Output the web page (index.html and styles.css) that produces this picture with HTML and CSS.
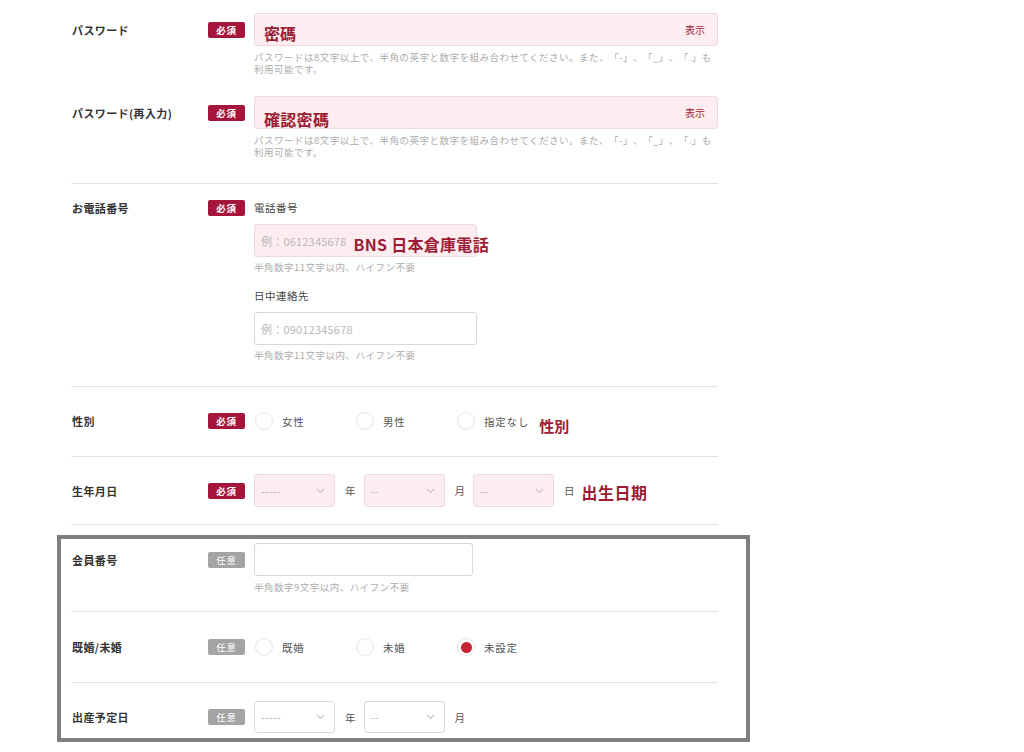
FILE: index.html
```html
<!DOCTYPE html>
<html lang="ja">
<head>
<meta charset="utf-8">
<title>会員情報入力</title>
<link rel="stylesheet" href="styles.css">
</head>
<body>
<div class="form">
  <section class="sec sec-pw">
    <div class="row row-input">
      <div class="lbl">パスワード</div>
      <div class="bcell"><span class="badge req">必須</span></div>
      <div class="field">
        <div class="inp pink"><span class="note note-pw1">密碼</span><span class="show">表示</span></div>
        <p class="help">パスワードは8文字以上で、半角の英字と数字を組み合わせてください。また、「-」、「_」、「.」も<br>利用可能です。</p>
      </div>
    </div>
    <div class="row row-input row-next">
      <div class="lbl">パスワード(再入力)</div>
      <div class="bcell"><span class="badge req">必須</span></div>
      <div class="field">
        <div class="inp pink"><span class="note note-pw2">確認密碼</span><span class="show">表示</span></div>
        <p class="help">パスワードは8文字以上で、半角の英字と数字を組み合わせてください。また、「-」、「_」、「.」も<br>利用可能です。</p>
      </div>
    </div>
  </section>

  <section class="sec sec-phone">
    <div class="row row-text">
      <div class="lbl">お電話番号</div>
      <div class="bcell"><span class="badge req">必須</span></div>
      <div class="field">
        <div class="sub">電話番号</div>
        <div class="inp pink phone"><span class="ph">例：0612345678</span><span class="note note-tel">BNS 日本倉庫電話</span></div>
        <p class="help help-tight">半角数字11文字以内、ハイフン不要</p>
        <div class="sub sub-2">日中連絡先</div>
        <div class="inp white phone"><span class="ph">例：09012345678</span></div>
        <p class="help help-tight">半角数字11文字以内、ハイフン不要</p>
      </div>
    </div>
  </section>

  <section class="sec sec-radio">
    <div class="row row-radio">
      <div class="lbl">性別</div>
      <div class="bcell"><span class="badge req">必須</span></div>
      <div class="field radios">
        <label class="opt"><span class="rd"></span>女性</label>
        <label class="opt"><span class="rd"></span>男性</label>
        <label class="opt opt-last"><span class="rd"></span>指定なし</label>
        <span class="note note-gender">性別</span>
      </div>
    </div>
  </section>

  <section class="sec sec-date">
    <div class="row row-input">
      <div class="lbl">生年月日</div>
      <div class="bcell"><span class="badge req">必須</span></div>
      <div class="field dates">
        <div class="sel pink"><span class="ph">-----</span><svg class="chev" width="9" height="6" viewBox="0 0 9 6"><path d="M1 1l3.5 3.5L8 1" fill="none" stroke="#c4c4c4" stroke-width="1.1"/></svg></div>
        <span class="unit">年</span>
        <div class="sel pink"><span class="ph">--</span><svg class="chev" width="9" height="6" viewBox="0 0 9 6"><path d="M1 1l3.5 3.5L8 1" fill="none" stroke="#c4c4c4" stroke-width="1.1"/></svg></div>
        <span class="unit">月</span>
        <div class="sel pink"><span class="ph">--</span><svg class="chev" width="9" height="6" viewBox="0 0 9 6"><path d="M1 1l3.5 3.5L8 1" fill="none" stroke="#c4c4c4" stroke-width="1.1"/></svg></div>
        <span class="unit unit-last">日</span>
        <span class="note note-birth">出生日期</span>
      </div>
    </div>
  </section>

  <div class="box">
    <section class="sec sec-member">
      <div class="row row-input">
        <div class="lbl">会員番号</div>
        <div class="bcell"><span class="badge opt-badge">任意</span></div>
        <div class="field">
          <div class="inp white member"></div>
          <p class="help">半角数字9文字以内、ハイフン不要</p>
        </div>
      </div>
    </section>

    <section class="sec sec-radio sec-marital">
      <div class="row row-radio">
        <div class="lbl">既婚/未婚</div>
        <div class="bcell"><span class="badge opt-badge">任意</span></div>
        <div class="field radios">
          <label class="opt"><span class="rd"></span>既婚</label>
          <label class="opt"><span class="rd"></span>未婚</label>
          <label class="opt opt-last"><span class="rd on"></span>未設定</label>
        </div>
      </div>
    </section>

    <section class="sec sec-due">
      <div class="row row-input row-due">
        <div class="lbl">出産予定日</div>
        <div class="bcell"><span class="badge opt-badge">任意</span></div>
        <div class="field dates">
          <div class="sel white"><span class="ph">-----</span><svg class="chev" width="9" height="6" viewBox="0 0 9 6"><path d="M1 1l3.5 3.5L8 1" fill="none" stroke="#c4c4c4" stroke-width="1.1"/></svg></div>
          <span class="unit">年</span>
          <div class="sel white"><span class="ph">--</span><svg class="chev" width="9" height="6" viewBox="0 0 9 6"><path d="M1 1l3.5 3.5L8 1" fill="none" stroke="#c4c4c4" stroke-width="1.1"/></svg></div>
          <span class="unit">月</span>
        </div>
      </div>
    </section>
  </div>
</div>
</body>
</html>
```

FILE: styles.css
```css
* { box-sizing: border-box; }

body {
  margin: 0;
  background: #fff;
  font-family: "Noto Sans CJK JP", "Noto Sans", sans-serif;
  color: #333;
  text-spacing-trim: space-all;
}

.form {
  width: 647px;
  margin-left: 71px;
  padding-top: 13px;
}

.sec + .sec { border-top: 1px solid #e2e2e2; }

.sec-pw { padding-bottom: 25px; }
.sec-phone { padding: 16px 0 25px; }
.sec-radio { padding: 24px 0 25px; }
.sec-date { padding: 17px 0 17px; border-bottom: 1px solid #e2e2e2; }

.box {
  margin: 10px -32px 0 -14px;
  border: 4px solid #7f7f7f;
  padding: 4px 28px 5px 10px;
}
.sec-member { padding-bottom: 18px; }
.sec-marital { padding: 25px 0 25px; }
.sec-due { padding-top: 18px; }

.row {
  display: grid;
  grid-template-columns: 137px 46px 464px;
  align-items: start;
}
.row-next { margin-top: 21px; }

.row-input { --h: 33px; }
.row-due { --h: 32px; }
.row-text { --h: 16px; }
.row-radio { --h: 20px; }

.lbl, .bcell {
  height: var(--h);
  display: flex;
  align-items: center;
}

.lbl {
  font-size: 11px;
  font-weight: 700;
  letter-spacing: 0.4px;
  color: #333;
  padding-left: 1px;
}

.badge {
  display: inline-flex;
  align-items: center;
  justify-content: center;
  width: 37px;
  height: 16px;
  border-radius: 2px;
  color: #fff;
  font-size: 9.5px;
  font-weight: 700;
  letter-spacing: 0.8px;
}
.badge.req { background: #a5143a; }
.badge.opt-badge { background: #a4a4a4; font-weight: 400; }

.inp {
  height: 33px;
  border: 1px solid #d8d8d8;
  border-radius: 3px;
  display: flex;
  align-items: center;
  padding: 0 12px 0 9px;
}
.inp.pink { background: #fdedf0; border-color: #ecdadd; }
.inp.white { background: #fff; }
.inp.phone { width: 223px; padding-left: 6px; }
.inp.member { width: 219px; height: 33px; }

.note {
  font-family: "Noto Sans CJK TC", "Noto Sans CJK JP", sans-serif;
  font-weight: 700;
  color: #9c1c34;
  font-size: 16px;
  line-height: 20px;
  white-space: nowrap;
}
.note-pw1 { padding-top: 7px; }
.note-pw2 { padding-top: 13px; letter-spacing: 0.3px; }
.note-tel { margin-left: 7px; padding-top: 7px; letter-spacing: 0.3px; }
.note-gender { font-size: 15px; padding-top: 9px; margin-left: 10px; }
.note-birth { font-size: 16px; padding-top: 3px; letter-spacing: 0.5px; }

.show {
  margin-left: auto;
  font-size: 10px;
  color: #a0203a;
}

.ph {
  font-size: 11px;
  color: #b8b8b8;
  letter-spacing: 0.2px;
  white-space: nowrap;
}

.help {
  margin: 5px 0 0;
  font-size: 9.5px;
  line-height: 12px;
  color: #acacac;
  white-space: nowrap;
  letter-spacing: 0.5px;
}
.help-tight { margin-top: 4px; }

.sub {
  font-size: 10.5px;
  line-height: 16px;
  color: #444;
  letter-spacing: 0.5px;
  margin-bottom: 8px;
}
.sub-2 { margin-top: 15px; }

.radios {
  display: flex;
  align-items: center;
  height: 20px;
}
.opt {
  display: flex;
  align-items: center;
  width: 101px;
  font-size: 10.5px;
  color: #555;
  letter-spacing: 0.8px;
  white-space: nowrap;
}
.opt-last { width: auto; }
.rd {
  width: 18px;
  height: 18px;
  border-radius: 50%;
  border: 1px solid #e6e6e6;
  box-shadow: inset 0 0 2px rgba(0,0,0,0.04);
  margin: 0 9px 0 1px;
  display: flex;
  align-items: center;
  justify-content: center;
  background: #fff;
}
.rd.on::after {
  content: "";
  width: 11px;
  height: 11px;
  border-radius: 50%;
  background: #c72330;
}

.dates {
  display: flex;
  align-items: center;
  height: var(--h);
}
.sel {
  width: 81px;
  height: var(--h);
  border: 1px solid #d8d8d8;
  border-radius: 3px;
  display: flex;
  align-items: center;
  padding: 0 9px 0 6px;
}
.sel.pink { background: #fdedf0; border-color: #ecdadd; }
.sel.white { background: #fff; }
.sel .chev { margin-left: auto; }
.unit {
  font-size: 10.5px;
  color: #555;
  padding: 0 8px 0 10px;
}
.unit-last { padding-right: 7px; }
```
